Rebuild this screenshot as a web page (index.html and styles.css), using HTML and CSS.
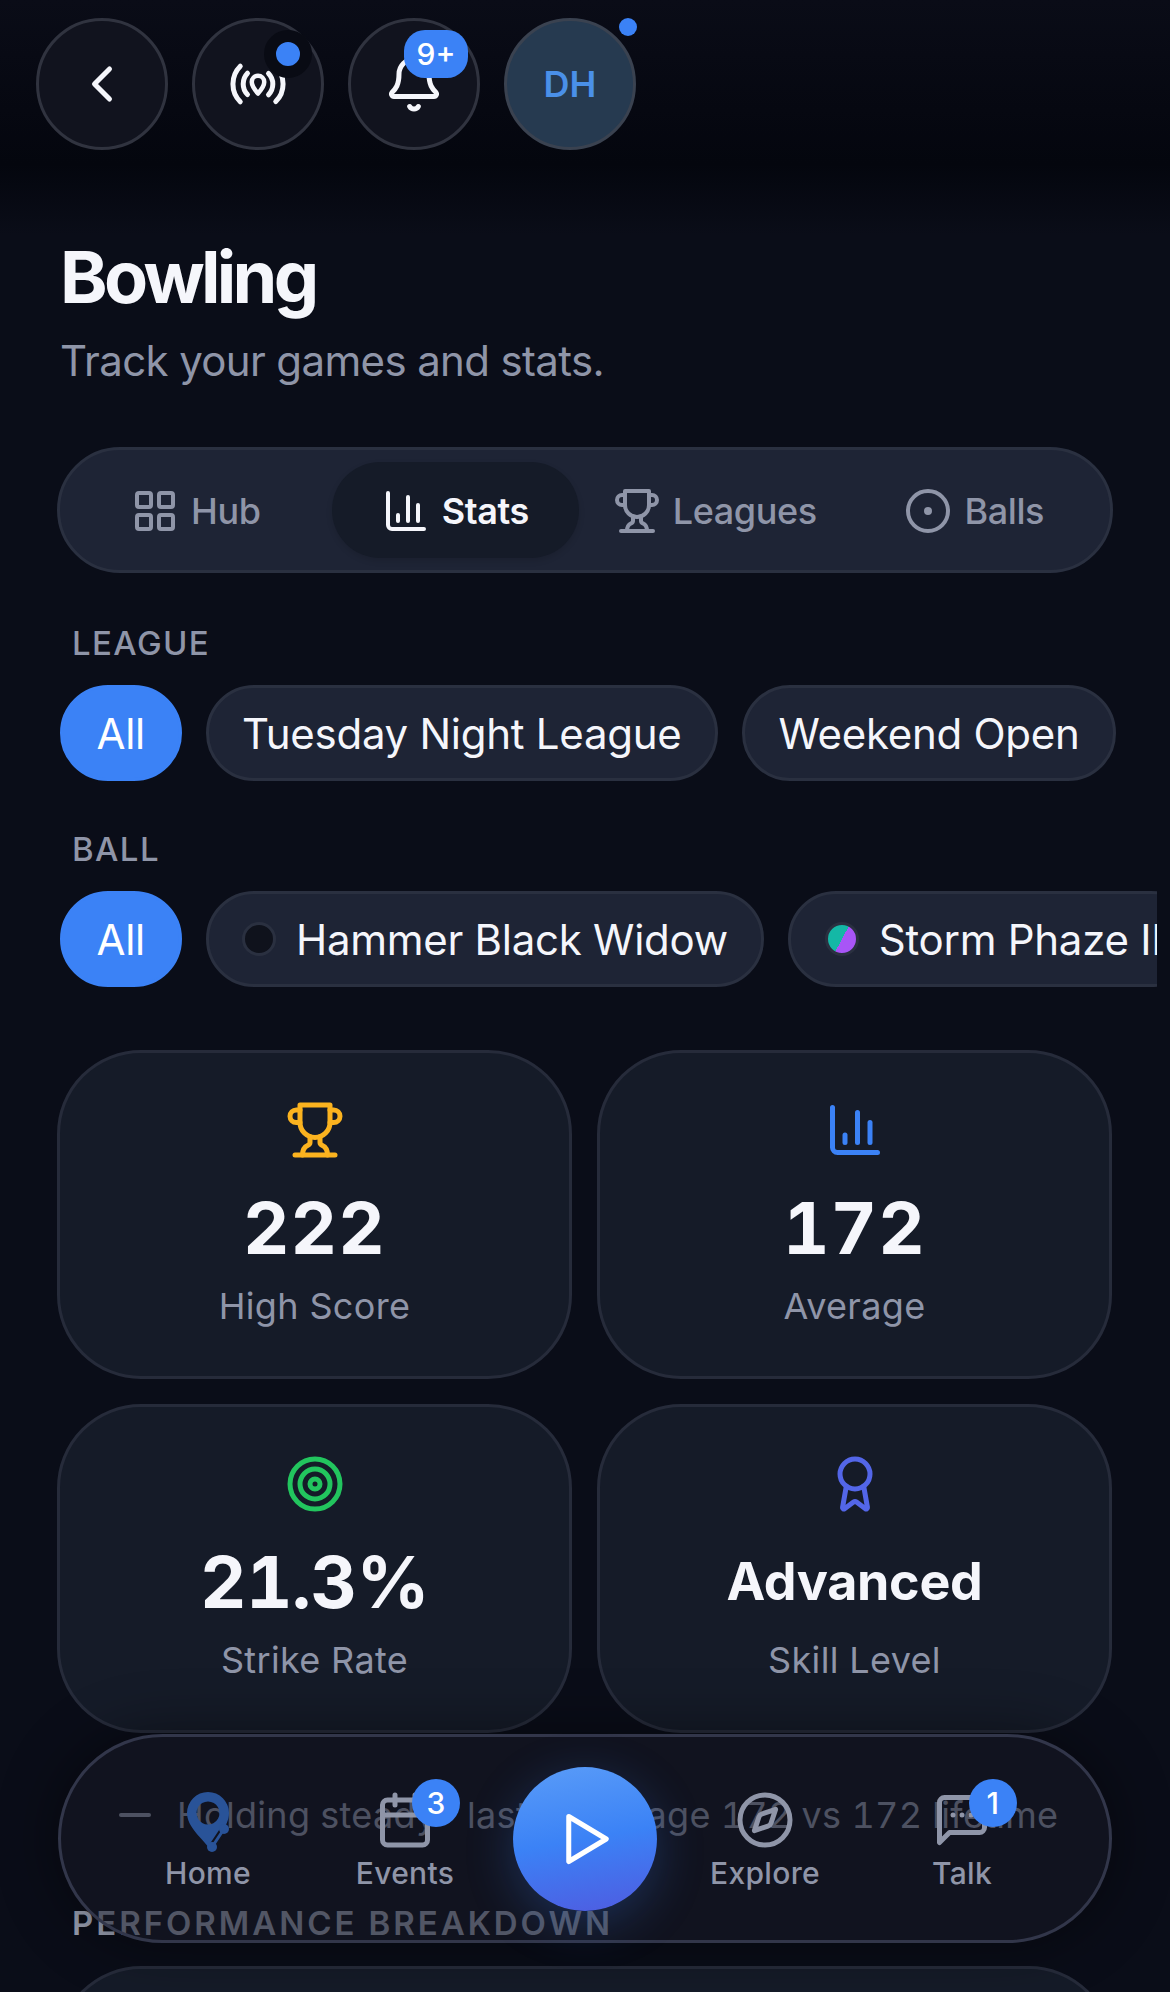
FILE: index.html
```
<!DOCTYPE html>
<html lang="en">
<head>
<meta charset="utf-8">
<title>Bowling</title>
<link rel="stylesheet" href="styles.css">
</head>
<body>
<div class="app">
  <header class="topbar">
    <button class="round"><svg class="i60" viewBox="0 0 24 24"><path d="m15 18-6-6 6-6"/></svg></button>
    <button class="round">
      <svg class="i60" viewBox="0 0 24 24"><path d="M4.9 19.1C1 15.2 1 8.8 4.9 4.9"/><path d="M7.8 16.2c-2.3-2.3-2.3-6.1 0-8.5"/><path d="M16.2 7.8c2.3 2.3 2.3 6.1 0 8.5"/><path d="M19.1 4.9C23 8.8 23 15.1 19.1 19"/><path class="pin" d="M12 15.800c-1.500-1.700-2.500-3-2.500-4.600a2.500 2.500 0 0 1 5 0c0 1.600-1 2.900-2.500 4.600Z"/></svg>
      <span class="live-dot"></span>
    </button>
    <button class="round">
      <svg class="i60" viewBox="0 0 24 24"><path d="M10.268 21a2 2 0 0 0 3.464 0"/><path d="M3.262 15.326A1 1 0 0 0 4 17h16a1 1 0 0 0 .74-1.673C19.41 13.956 18 12.499 18 8A6 6 0 0 0 6 8c0 4.499-1.411 5.956-2.738 7.326"/></svg>
      <span class="badge badge-wide">9+</span>
    </button>
    <button class="round avatar">DH<span class="avatar-dot"></span></button>
  </header>

  <main class="content">
    <h1 class="title">Bowling</h1>
    <p class="subtitle">Track your games and stats.</p>

    <nav class="tabs">
      <a class="tab"><svg class="i48" viewBox="0 0 24 24"><rect x="3" y="3" width="7" height="7" rx="1"/><rect x="14" y="3" width="7" height="7" rx="1"/><rect x="14" y="14" width="7" height="7" rx="1"/><rect x="3" y="14" width="7" height="7" rx="1"/></svg>Hub</a>
      <a class="tab tab-active"><svg class="i48" viewBox="0 0 24 24"><path d="M3 3v16a2 2 0 0 0 2 2h16"/><path d="M18 17V9"/><path d="M13 17V5"/><path d="M8 17v-3"/></svg>Stats</a>
      <a class="tab"><svg class="i48" viewBox="0 0 24 24"><path d="M6 9H4.5a2.5 2.5 0 0 1 0-5H6"/><path d="M18 9h1.5a2.5 2.5 0 0 0 0-5H18"/><path d="M4 22h16"/><path d="M10 14.66V17c0 .55-.47.98-.97 1.21C7.85 18.75 7 20.24 7 22"/><path d="M14 14.66V17c0 .55.47.98.97 1.21C16.15 18.75 17 20.24 17 22"/><path d="M18 2H6v7a6 6 0 0 0 12 0V2Z"/></svg>Leagues</a>
      <a class="tab"><svg class="i48" viewBox="0 0 24 24"><circle cx="12" cy="12" r="10"/><circle cx="12" cy="12" r="1"/></svg>Balls</a>
    </nav>

    <div class="label label-league">LEAGUE</div>
    <div class="pills">
      <span class="pill pill-on">All</span>
      <span class="pill">Tuesday Night League</span>
      <span class="pill">Weekend Open</span>
    </div>

    <div class="label label-ball">BALL</div>
    <div class="pills">
      <span class="pill pill-on">All</span>
      <span class="pill"><i class="ball ball-black"></i>Hammer Black Widow</span>
      <span class="pill"><i class="ball ball-storm"></i>Storm Phaze II</span>
    </div>

    <section class="stats">
      <div class="card">
        <svg class="i60 gold" viewBox="0 0 24 24"><path d="M6 9H4.5a2.5 2.5 0 0 1 0-5H6"/><path d="M18 9h1.5a2.5 2.5 0 0 0 0-5H18"/><path d="M4 22h16"/><path d="M10 14.66V17c0 .55-.47.98-.97 1.21C7.85 18.75 7 20.24 7 22"/><path d="M14 14.66V17c0 .55.47.98.97 1.21C16.15 18.75 17 20.24 17 22"/><path d="M18 2H6v7a6 6 0 0 0 12 0V2Z"/></svg>
        <div class="value">222</div>
        <div class="caption">High Score</div>
      </div>
      <div class="card">
        <svg class="i60 blue" viewBox="0 0 24 24"><path d="M3 3v16a2 2 0 0 0 2 2h16"/><path d="M18 17V9"/><path d="M13 17V5"/><path d="M8 17v-3"/></svg>
        <div class="value">172</div>
        <div class="caption">Average</div>
      </div>
      <div class="card">
        <svg class="i60 green" viewBox="0 0 24 24"><circle cx="12" cy="12" r="10"/><circle cx="12" cy="12" r="6"/><circle cx="12" cy="12" r="2"/></svg>
        <div class="value value-pct">21.3%</div>
        <div class="caption">Strike Rate</div>
      </div>
      <div class="card">
        <svg class="i60 indigo" viewBox="0 0 24 24"><path d="m15.477 12.89 1.515 8.526a.5.5 0 0 1-.81.47l-3.58-2.687a1 1 0 0 0-1.197 0l-3.586 2.686a.5.5 0 0 1-.81-.469l1.514-8.526"/><circle cx="12" cy="8" r="6"/></svg>
        <div class="value value-small">Advanced</div>
        <div class="caption">Skill Level</div>
      </div>
    </section>

    <div class="trend"><svg class="i48" viewBox="0 0 24 24"><path d="M5 12h14"/></svg>Holding steady · last 5 average 172 vs 172 lifetime</div>
    <div class="label label-perf">PERFORMANCE BREAKDOWN</div>
    <div class="card card-next"></div>
  </main>

  <footer class="dock">
    <a class="dock-item">
      <span class="dock-icon">
        <svg class="home-pin" viewBox="0 0 60 60"><path fill-rule="evenodd" d="M31 58C24 48 9 37 9 23a21 21 0 0 1 42 0c0 14-13 25-20 35ZM30 11.500a11.500 11.500 0 1 0 .01 0Z"/><path class="node-gap" d="M46 39 34 57"/><path class="node" d="M46 39 34 57"/><circle cx="46" cy="39" r="5"/><circle cx="34" cy="57" r="5"/></svg>
      </span>
      Home
    </a>
    <a class="dock-item">
      <span class="dock-icon">
        <svg class="i60" viewBox="0 0 24 24"><path d="M8 2v4"/><path d="M16 2v4"/><rect x="3" y="4" width="18" height="18" rx="2"/><path d="M3 10h18"/></svg>
        <span class="badge badge-round">3</span>
      </span>
      Events
    </a>
    <button class="play"><svg class="i60" viewBox="0 0 24 24"><path d="M5.500 3 20.500 12 5.500 21Z"/></svg></button>
    <a class="dock-item">
      <span class="dock-icon">
        <svg class="i60" viewBox="0 0 24 24"><path d="m16.240 7.760-1.804 5.411a2 2 0 0 1-1.265 1.265L7.760 16.240l1.804-5.411a2 2 0 0 1 1.265-1.265z"/><circle cx="12" cy="12" r="10"/></svg>
      </span>
      Explore
    </a>
    <a class="dock-item">
      <span class="dock-icon">
        <svg class="i60" viewBox="0 0 24 24"><path d="M21 15a2 2 0 0 1-2 2H7l-4 4V5a2 2 0 0 1 2-2h14a2 2 0 0 1 2 2z"/><path d="M8.400 10h.01"/><path d="M12 10h.01"/><path d="M15.600 10h.01"/></svg>
        <span class="badge badge-round">1</span>
      </span>
      Talk
    </a>
  </footer>
</div>
</body>
</html>
```
FILE: styles.css
```
* { box-sizing: border-box; }
html, body { margin: 0; padding: 0; height: 1992px; overflow: hidden; background: #0a0d18; }
body { font-family: Inter, "Liberation Sans", sans-serif; color: #f5f6fb; }
button { font-family: inherit; padding: 0; }
svg { fill: none; stroke: currentColor; stroke-linecap: round; stroke-linejoin: round; flex: none; display: block; }

.app { position: relative; width: 1170px; height: 1992px; overflow: hidden; }

.i48 { width: 48px; height: 48px; stroke-width: 2; }
.i60 { width: 60px; height: 60px; stroke-width: 2; }
.gold { color: #fbb31f; }
.blue { color: #3b82f6; }
.green { color: #22c55e; }
.indigo { color: #5366e8; }

.topbar {
  display: flex; gap: 24px; height: 235px; padding: 18px 36px 0;
  background: linear-gradient(180deg, #0a0c17 0%, #04060e 70%, #0a0d18 100%);
}
.round {
  position: relative; width: 132px; height: 132px; border-radius: 50%;
  border: 3px solid #30333f; background: #11131e; color: #f5f6fb;
  display: flex; align-items: center; justify-content: center;
}
.pin { stroke-width: 1.8; }
.live-dot {
  position: absolute; top: 21px; left: 81px; width: 24px; height: 24px; border-radius: 50%;
  background: #3b82f6; box-sizing: content-box; border: 12px solid #090b14; margin: -12px;
}
.badge {
  position: absolute; display: flex; align-items: center; justify-content: center;
  background: #3b82f6; color: #fff; font-size: 30px; font-weight: 500; height: 48px;
}
.badge-wide { top: 9px; left: 53px; width: 64px; border-radius: 21px; }
.badge-round { top: -11px; left: 37px; width: 48px; border-radius: 50%; }
.avatar { background: #263a50; border-color: #3a4250; color: #4a90e8; font-size: 36px; font-weight: 600; }
.avatar-dot { position: absolute; top: -3px; right: -4px; width: 18px; height: 18px; border-radius: 50%; background: #3b82f6; }

.content { padding: 0 57px; }
.title { margin: 0; font-size: 72px; line-height: 84px; font-weight: 700; letter-spacing: -3.7px; padding-left: 3px; }
.subtitle { margin: 12px 0 56px; font-size: 42px; line-height: 60px; letter-spacing: -.64px; color: #8f95a8; padding-left: 3px; }

.tabs {
  display: grid; grid-template-columns: repeat(4, 1fr); gap: 12px; height: 126px; padding: 12px;
  background: #1e2435; border: 3px solid #2a3040; border-radius: 63px;
}
.tab {
  display: flex; align-items: center; justify-content: center; gap: 12px; padding-top: 2px; border-radius: 48px;
  font-size: 36px; font-weight: 500; letter-spacing: -.4px; color: #8f95a8;
}
.tab-active { background: #151b28; color: #f5f6fb; font-weight: 600; box-shadow: 0 3px 6px rgba(0,0,0,.12); }

.label { font-size: 33px; line-height: 42px; font-weight: 500; letter-spacing: 1.4px; color: #8f95a8; padding-left: 15px; }
.label-league { margin-top: 49px; }
.label-ball { margin-top: 47px; }
.label-perf { margin-top: 63px; font-weight: 600; letter-spacing: 2.95px; color: #9aa0b2; }

.pills { display: flex; gap: 24px; margin: 21px -44px 0 0; padding-left: 3px; overflow: hidden; }
.pill {
  flex: none; display: flex; align-items: center; gap: 20px; height: 96px; padding: 0 33.5px;
  font-size: 42px; letter-spacing: -.27px; color: #f5f6fb; background: #1e2435; border: 3px solid #2a3040; border-radius: 48px;
}
.pill-on { background: #3b82f6; border-color: #3b82f6; color: #fff; }
.ball { flex: none; width: 34px; height: 34px; border-radius: 50%; border: 3px solid #2a3040; }
.ball-black { background: #0f121c; }
.ball-storm { background: linear-gradient(118deg, #14b8a6 50%, #a855f7 50%); }

.stats { display: grid; grid-template-columns: 515px 515px; gap: 25px; margin-top: 63px; }
.card {
  display: flex; flex-direction: column; align-items: center; height: 329px; padding-top: 47px;
  background: #151b28; border: 3px solid #262b3a; border-radius: 84px;
}
.value { margin-top: 26px; font-size: 72px; line-height: 84px; font-weight: 700; font-variant-numeric: tabular-nums; letter-spacing: 1.2px; }
.value-pct { letter-spacing: -.6px; }
.value-small { font-size: 52px; letter-spacing: -.3px; }
.caption { margin-top: 12px; font-size: 36px; line-height: 48px; letter-spacing: .35px; color: #8f95a8; }

.trend { display: flex; align-items: center; gap: 18px; margin-top: 58px; height: 48px; padding-left: 54px; font-size: 36px; letter-spacing: .3px; font-variant-numeric: tabular-nums; color: #8f95a8; }
.card-next { margin-top: 22px; width: 1056px; height: 300px; }

.dock {
  position: absolute; left: 58px; top: 1734px; width: 1054px; height: 209px; padding: 0 45px;
  display: grid; grid-template-columns: 204px 190px 170px 190px 204px; align-items: center; justify-items: center;
  background: rgba(23, 26, 39, .55); border: 3px solid #32364a; border-radius: 105px;
  box-shadow: 0 0 60px rgba(0, 0, 0, .45);
}
.dock-item { display: flex; flex-direction: column; align-items: center; gap: 5px; padding-top: 4px; font-size: 30px; line-height: 36px; font-weight: 500; letter-spacing: .3px; color: #8f95a8; }
.dock-icon { position: relative; width: 60px; height: 60px; }
.home-pin { width: 60px; height: 60px; overflow: visible; fill: #295398; stroke: none; }
.node-gap { stroke: #11141f; stroke-width: 7; }
.node { stroke: #295398; stroke-width: 3; }
.play {
  width: 144px; height: 144px; border: 0; border-radius: 50%; color: #fff;
  display: flex; align-items: center; justify-content: center;
  background: linear-gradient(170deg, #5a9cf8 0%, #3b82f6 50%, #4f5be0 100%);
  box-shadow: 0 12px 48px rgba(59, 130, 246, .25);
}
```
